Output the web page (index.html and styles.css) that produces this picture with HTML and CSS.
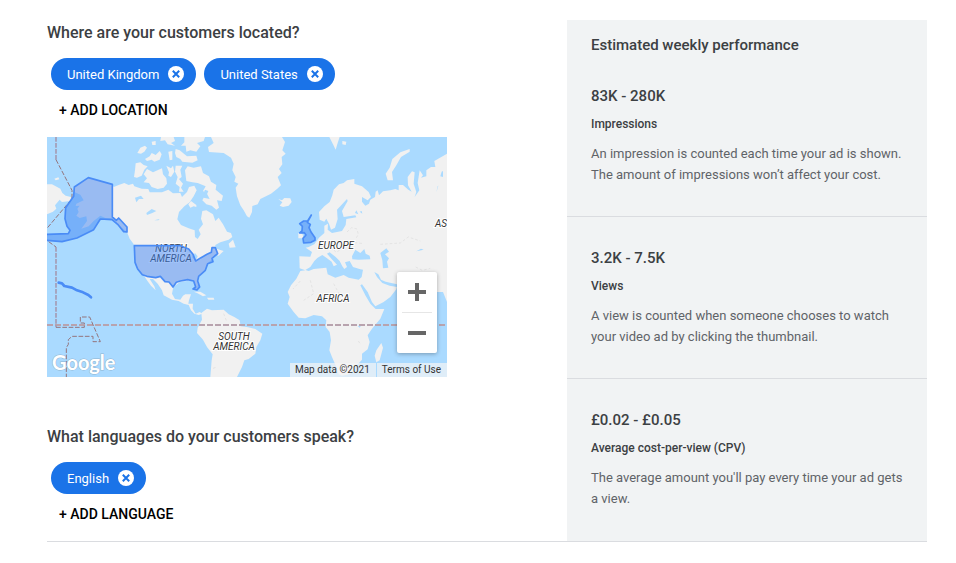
FILE: index.html
```html
<!DOCTYPE html>
<html lang="en">
<head>
    <meta charset="UTF-8">
    <meta name="viewport" content="width=device-width, initial-scale=1.0">
    <title>Locations and languages</title>
    <link rel="stylesheet" href="styles.css">
</head>
<body>
    <div class="panel">
        <main class="targeting">
            <!-- Locations -->
            <section>
                <h2>Where are your customers located?</h2>
                <div class="chips">
                    <span class="chip">United Kingdom
                        <button class="chip-remove" aria-label="Remove United Kingdom"><svg viewBox="0 0 16 16"><circle cx="8" cy="8" r="8"/><path d="M4.8 4.8l6.4 6.4M11.2 4.8l-6.4 6.4"/></svg></button>
                    </span>
                    <span class="chip">United States
                        <button class="chip-remove" aria-label="Remove United States"><svg viewBox="0 0 16 16"><circle cx="8" cy="8" r="8"/><path d="M4.8 4.8l6.4 6.4M11.2 4.8l-6.4 6.4"/></svg></button>
                    </span>
                </div>
                <button class="add-btn">+ ADD LOCATION</button>

                <div class="map">
                    <svg class="map-svg" viewBox="0 0 400 240" role="img" aria-label="World map">
                        <g transform="scale(.33333)">
                            <g class="land">
                                <!-- Chukotka -->
                                <path d="M0 142L15 142 40 155 46 168 56 176 72 180 70 192 45 195 38 188 24 205 28 215 18 224 0 232zM22 125L34 121 37 127 26 130z"/>
                                <!-- North America -->
                                <path d="M196 142L124 122 82 150 82 165 100 173 110 190 88 200 86 207 98 206 91 215 95 225 88 236 98 243 118 238 120 252 103 275 125 268 140 252 160 236 175 243 196 244 212 262 240 285 248 305 262 324 262 370 272 396 290 415 302 433 312 446 326 460 322 448 308 426 318 426 332 440 345 460 350 475 375 488 395 492 410 500 425 504 432 520 442 530 455 534 466 530 458 525 446 530 437 515 438 500 424 500 426 490 432 472 415 472 408 476 400 488 384 486 375 470 379 450 400 434 440 430 450 460 456 420 476 400 480 380 496 366 504 352 515 356 530 342 518 338 505 334 505 324 520 316 545 308 556 300 552 288 540 284 528 262 515 242 505 252 498 232 478 220 466 222 462 245 468 262 455 278 461 292 452 306 444 300 443 280 425 274 402 264 391 247 396 225 412 208 428 196 440 178 449 160 442 146 426 150 420 165 405 180 400 168 378 169 364 158 345 166 308 166 304 156 284 155 262 148 258 140 245 144 232 138 215 144 200 150z"/>
                                <path d="M545 320L558 308 566 331 548 332zM440 464L460 464 478 475 468 478 450 468zM480 482L500 482 502 488 484 488z"/>
                                <!-- Arctic islands -->
                                <path d="M266 79L280 76 290 84 302 88 292 98 284 116 270 122 261 120 264 100z"/>
                                <path d="M300 96L318 106 345 94 348 112 358 124 360 140 350 152 332 156 314 150 306 138 290 136 300 124 290 112z"/>
                                <path d="M271 48L280 32 294 26 300 32 292 44 282 50zM294 66L308 58 314 48 326 54 338 42 344 52 338 68 322 74 314 68 300 72zM314 14L326 12 326 24 316 24zM342 0L380 0 384 12 372 18 384 26 362 22 354 10 340 12zM364 44L376 42 376 68 368 70zM386 36L398 40 420 58 448 56 452 70 436 77 406 74 400 66 388 60 384 48z"/>
                                <path d="M412 0L474 0 470 12 450 18 460 28 448 44 430 40 418 44 416 26 402 26 412 16zM358 86L372 94 378 86 382 104 372 120 364 116 366 106zM386 86L406 86 400 98 404 120 396 126 408 140 402 152 410 164 396 164 398 150 386 140 392 120 384 104z"/>
                                <path d="M414 100L422 88 440 92 462 88 468 108 486 118 492 134 508 144 506 158 528 176 524 192 510 190 516 212 508 218 494 206 478 202 466 190 470 182 488 186 480 170 468 162 476 148 452 138 436 136 418 132zM424 202L432 192 448 204 448 210 440 208 430 212z"/>
                                <!-- Greenland, Iceland, Svalbard -->
                                <path d="M470 0L492 0 500 18 483 30 486 45 530 48 552 62 560 80 556 100 566 120 562 134 574 140 566 152 570 178 580 205 590 220 600 238 607 242 615 225 616 207 632 202 640 186 672 170 690 156 702 145 692 120 704 108 696 96 706 82 704 60 716 50 706 40 714 15 705 0z"/>
                                <path d="M694 186L705 190 712 183 730 184 734 195 725 206 708 210 698 206 706 196zM847 0L878 0 872 18 866 38 858 22zM886 12L898 14 896 24 886 22z"/>
                                <!-- Novaya Zemlya -->
                                <path d="M1088 36L1088 44 1062 60 1048 85 1035 105 1038 130 1022 130 1016 110 1028 92 1036 66 1060 46z"/>
                                <!-- South America -->
                                <path d="M463 528L480 515 495 520 530 518 545 532 562 540 578 550 581 568 600 570 625 576 646 590 640 610 628 630 625 650 605 666 592 670 585 690 570 720 490 720 494 670 497 652 480 630 468 608 450 588 452 572 465 548z"/>
                                <!-- Europe, Asia and Africa -->
                                <path d="M816 225L832 208 848 195 856 175 860 158 876 142 890 138 900 130 922 126 922 140 945 148 965 165 972 180 962 190 945 180 945 194 955 206 966 200 970 188 984 180 986 164 992 160 996 175 1008 163 1030 160 1045 156 1055 160 1055 144 1068 144 1084 158 1094 164 1083 145 1082 120 1095 103 1103 106 1100 140 1108 165 1103 180 1117 160 1112 138 1118 100 1128 115 1122 122 1138 118 1138 100 1152 90 1165 90 1162 72 1200 50V495L1188 465 1170 465 1085 452 1050 448 1048 457 1030 480 1010 495 985 508 975 495 962 465 945 442 940 445 955 475 970 500 986 516 1012 516 1000 545 975 575 962 595 968 615 962 637 945 650 945 668 925 690 912 710 885 716 875 712 868 690 855 660 847 640 852 610 848 585 836 570 838 550 825 538 800 534 775 544 755 542 740 525 722 500 728 480 722 465 732 445 748 425 760 402 775 400 758 394 757 358 790 359 795 345 776 332 785 330 802 322 816 302 832 288 832 266 843 260 842 278 855 288 885 282 896 264 898 246 928 241 925 235 890 240 885 222 902 192 900 186 870 218 872 246 864 272 852 278 846 260 838 245 832 254 818 248z"/>
                                <path d="M754 288L766 290 770 304 754 304zM1003 618L1008 632 998 670 988 676 983 656 988 640z"/>
                            </g>
                            <g class="sea">
                                <!-- Mediterranean, Black Sea, Caspian, Persian Gulf -->
                                <path d="M775 399L790 390 802 372 812 362 826 354 838 362 854 374 860 388 870 383 854 366 840 350 848 346 866 360 878 372 886 388 892 396 900 390 894 376 908 372 918 390 940 397 948 398 944 420 935 428 905 422 890 414 865 422 842 412 838 392 800 396 785 402z"/>
                                <path d="M915 358L925 338 940 348 952 336 956 350 968 356 970 367 935 368 916 367zM1000 348L1018 334 1026 344 1014 352 1026 364 1020 374 1024 392 1008 394 1006 370zM982 405L994 412 1002 428 1016 434 1050 442 1050 450 1028 446 1006 438 990 420zM1108 343L1122 335 1130 338z"/>
                                <!-- Lakes and inlets -->
                                <path d="M264 182L282 176 290 186 276 186 268 196zM298 228L314 216 328 222 316 228 300 234zM322 250L338 246 334 250zM435 360L444 348 452 358 446 372zM474 158L484 162 480 172 470 168zM932 567L944 563 938 572z"/>
                                <path d="M924 228L928 220 934 232zM938 224L944 222 946 230zM1188 120L1180 118 1184 104 1188 102zM1168 166L1172 148 1174 146z"/>
                            </g>
                            <g class="country-borders">
                                <path d="M900 285L914 272 930 276 934 292 926 306M850 330L868 346 880 338M905 335L918 316 950 320M760 432L738 456M790 430L800 470 770 490M860 440L876 470 866 500M1000 322L1060 318 1084 300 1120 312M1106 390L1126 400 1150 394M530 530L540 556M522 628L534 640M498 694L510 690M934 612L942 624"/>
                            </g>
                            <path class="equator" d="M0 564H1200"/>
                            <path class="date-line" d="M27 0V68M27 330V571"/>
                            <path class="date-line-thin" d="M27 68L75 160V185L0 274M5 314L27 330M27 571H112V558H100V540H128L160 614H138V598H75L64 608 64 622 58 632V720"/>
                        </g>
                        <g class="map-labels">
                            <text x="124" y="115">NORTH</text>
                            <text x="124" y="125">AMERICA</text>
                            <text x="289" y="112">EUROPE</text>
                            <text x="286" y="165">AFRICA</text>
                            <text x="187" y="203">SOUTH</text>
                            <text x="187" y="213">AMERICA</text>
                            <text x="394" y="90">AS</text>
                        </g>
                        <!-- Selected countries -->
                        <g class="selected" transform="scale(.33333)">
                            <path d="M82 150L124 122 196 142V240L208 250 215 243 240 270 240 285 230 284 212 262 195 248 160 246 140 278 90 303 45 314 -4 310 -4 292 64 290 69 280 60 268 54 245 56 212 80 178z"/>
                            <path d="M262 326H400L425 336 438 352 446 372 462 362 480 352 493 346 495 332 505 332 512 350 495 364 498 374 482 380 475 400 455 418 452 432 458 450 450 459 438 456 446 450 440 432 422 428 400 432 388 436 378 450 366 435 354 434 340 418 326 422 300 418 286 413 272 396 264 376z"/>
                            <path d="M793 234L782 252 770 252 758 260 766 268 765 282 758 288 772 287 777 294 768 304 770 318 792 316 804 310 804 302 792 285 786 272 790 262 781 256z"/>
                            <path class="hawaii" d="M35 437L45 439 52 447 75 452 90 460 108 466 124 474 132 481"/>
                        </g>
                        <text class="google" x="5" y="233">Google</text>
                    </svg>
                    <div class="zoom">
                        <button aria-label="Zoom in"><svg viewBox="0 0 18 18"><path d="M7 0h4v7h7v4h-7v7H7v-7H0V7h7z"/></svg></button>
                        <button aria-label="Zoom out"><svg viewBox="0 0 18 18"><path d="M0 7h18v4H0z"/></svg></button>
                    </div>
                    <div class="attribution">
                        <span>Map data ©2021</span>
                        <a href="#">Terms of Use</a>
                    </div>
                </div>
            </section>

            <!-- Languages -->
            <section class="languages">
                <h2>What languages do your customers speak?</h2>
                <div class="chips">
                    <span class="chip">English
                        <button class="chip-remove" aria-label="Remove English"><svg viewBox="0 0 16 16"><circle cx="8" cy="8" r="8"/><path d="M4.8 4.8l6.4 6.4M11.2 4.8l-6.4 6.4"/></svg></button>
                    </span>
                </div>
                <button class="add-btn">+ ADD LANGUAGE</button>
            </section>
        </main>

        <!-- Weekly estimates -->
        <aside class="estimates">
            <h3>Estimated weekly performance</h3>
            <div class="metric">
                <div class="metric-value">83K - 280K</div>
                <div class="metric-label">Impressions</div>
                <p>An impression is counted each time your ad is shown. The amount of impressions won’t affect your cost.</p>
            </div>
            <div class="metric">
                <div class="metric-value">3.2K - 7.5K</div>
                <div class="metric-label">Views</div>
                <p>A view is counted when someone chooses to watch your video ad by clicking the thumbnail.</p>
            </div>
            <div class="metric">
                <div class="metric-value">£0.02 - £0.05</div>
                <div class="metric-label">Average cost-per-view (CPV)</div>
                <p>The average amount you'll pay every time your ad gets a view.</p>
            </div>
        </aside>
    </div>
</body>
</html>
```
FILE: styles.css
```css
* {
    box-sizing: border-box;
}
body {
    margin: 0;
    font-family: Roboto, Arial, sans-serif;
    color: #3c4043;
    background-color: #fff;
}
button {
    font-family: inherit;
    border: none;
    padding: 0;
    background: none;
    cursor: pointer;
}
h2, h3, p {
    margin: 0;
}
.panel {
    display: flex;
    margin: 20px 29px 20px 47px;
    border-bottom: 1px solid #dadce0;
}
.targeting {
    flex: 1;
}
h2 {
    font-size: 16px;
    font-weight: 500;
    line-height: 26px;
}

/* Chips */
.chips {
    display: flex;
    gap: 8px;
    margin: 12px 4px 2px;
}
.chip {
    display: flex;
    align-items: center;
    gap: 9px;
    height: 32px;
    padding: 0 12px 0 16px;
    border-radius: 16px;
    background-color: #1a73e8;
    color: #fff;
    font-size: 13px;
}
.chip-remove svg {
    display: block;
    width: 16px;
    height: 16px;
    fill: #fff;
    stroke: #1a73e8;
    stroke-width: 2;
}
.chip-remove circle {
    stroke: none;
}
.add-btn {
    display: block;
    height: 36px;
    padding: 0 12px;
    color: #000;
    font-size: 14px;
    font-weight: 500;
}

/* Map */
.map {
    position: relative;
    max-width: 400px;
    margin-top: 9px;
    overflow: hidden;
    background-color: #aadaff;
}
.map-svg {
    display: block;
    width: 100%;
}
.land {
    fill: #f1f1f1;
}
.sea {
    fill: #aadaff;
}
.country-borders {
    fill: none;
    stroke: #dcdcdc;
    stroke-width: 2;
    stroke-dasharray: 8 6;
}
.equator {
    fill: none;
    stroke: #b8a3ae;
    stroke-width: 6;
    stroke-dasharray: 18 6;
}
.date-line {
    fill: none;
    stroke: #a59cb5;
    stroke-width: 5;
    stroke-dasharray: 14 4;
}
.date-line-thin {
    fill: none;
    stroke: #94747c;
    stroke-width: 3;
    stroke-dasharray: 14 5;
}
.selected {
    fill: #4285f4;
    fill-opacity: 0.5;
    stroke: #4a8cf6;
    stroke-width: 5;
    stroke-linejoin: round;
}
.selected .hawaii {
    fill: none;
    stroke-width: 8;
    stroke-linecap: round;
}
.map-labels text {
    font-size: 10px;
    font-style: italic;
    text-anchor: middle;
    fill: #333;
    stroke: #fff;
    stroke-width: 2px;
    paint-order: stroke;
}
.google {
    font-family: Lato, sans-serif;
    font-size: 20px;
    font-weight: 700;
    fill: #fff;
    stroke: #8fb4d0;
    stroke-width: 1px;
    paint-order: stroke;
}
.zoom {
    position: absolute;
    right: 10px;
    bottom: 24px;
    width: 40px;
    border-radius: 2px;
    background-color: #fff;
    box-shadow: 0 1px 4px rgba(0, 0, 0, 0.3);
}
.zoom button {
    display: flex;
    align-items: center;
    justify-content: center;
    width: 30px;
    height: 40px;
    margin: 0 5px;
}
.zoom button + button {
    height: 41px;
    border-top: 1px solid #e6e6e6;
}
.zoom svg {
    width: 18px;
    height: 18px;
    fill: #666;
}
.attribution {
    position: absolute;
    right: 0;
    bottom: 0;
    display: flex;
    gap: 1px;
    font-size: 10px;
    line-height: 14px;
}
.attribution span,
.attribution a {
    padding: 0 6px 0 5px;
    background-color: rgba(245, 245, 245, 0.7);
    color: #333;
    text-decoration: none;
}
.languages {
    margin-top: 47px;
}

/* Estimates sidebar */
.estimates {
    width: 360px;
    padding-top: 15px;
    background-color: #f1f3f4;
}
.estimates h3 {
    padding: 0 24px;
    font-size: 15px;
    font-weight: 500;
    line-height: 20px;
}
.metric {
    padding: 31px 24px;
    border-bottom: 1px solid #dadce0;
}
.metric:last-child {
    padding-bottom: 32px;
    border-bottom: none;
}
.metric-value {
    font-size: 15px;
    font-weight: 500;
    line-height: 20px;
}
.metric-label {
    margin-top: 10px;
    font-size: 12px;
    font-weight: 500;
    line-height: 16px;
}
.metric p {
    margin-top: 11px;
    color: #5f6368;
    font-size: 13px;
    line-height: 21px;
}
```
